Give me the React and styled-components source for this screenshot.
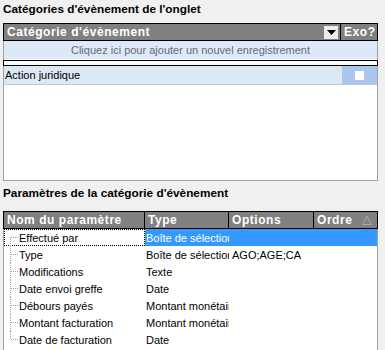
import styled, { createGlobalStyle } from 'styled-components';

// STYLES
const GlobalStyle = createGlobalStyle`
  body {
    margin: 0;
    background: #f0f0f0;
    font-family: 'Liberation Sans', Arial, sans-serif;
    font-size: 11px;
    color: #000;
  }
`;

const Page = styled.div`
  width: 385px;
  height: 350px;
  overflow: hidden;
  padding: 0 7px 0 3px;
  box-sizing: border-box;
`;

const Title = styled.div`
  font-weight: bold;
  font-size: 11.8px;
  height: ${(props) => props.h}px;
  line-height: 16px;
  padding-top: ${(props) => props.top}px;
  box-sizing: border-box;
  color: #000;
`;

const Grid = styled.div`
  border: 1px solid #a0a0a0;
  border-top: none;
  background: #fff;
  height: ${(props) => props.h}px;
  box-sizing: border-box;
`;

const Header = styled.div`
  display: grid;
  grid-template-columns: ${(props) => props.cols};
  background: #808080;
  border: 1px solid #000;
  margin: 0 -1px;
  height: 18px;
  box-sizing: border-box;
`;

const HeadCell = styled.div`
  display: flex;
  align-items: center;
  color: #fff;
  font-weight: bold;
  font-size: 12px;
  letter-spacing: 0.55px;
  padding: 0 2px 0 3px;
  border-right: ${(props) => (props.last ? 'none' : '1px solid #000')};
  white-space: nowrap;
  overflow: hidden;
`;

const DropButton = styled.span`
  margin-left: auto;
  width: 14px;
  height: 13px;
  background: #ececec;
  display: flex;
  align-items: center;
  justify-content: center;
`;

const SortMark = styled.span`
  margin-left: auto;
  margin-right: 3px;
  display: flex;
`;

const AddRow = styled.div`
  height: 18px;
  line-height: 18px;
  background: #dde9f6;
  color: #6a6a78;
  text-align: center;
  font-size: 11px;
`;

const Splitter = styled.div`
  height: 6px;
  margin: 1px -1px 0;
  background: #fafafa;
  border: 1px solid #000;
  box-sizing: border-box;
`;

const DataRow = styled.div`
  display: grid;
  grid-template-columns: 1fr 35px;
  height: 18px;
  background: #dde8f5;
  border-bottom: 1px solid #c8c8c8;
  font-size: 11px;
`;

const DataCell = styled.div`
  display: flex;
  align-items: center;
  justify-content: ${(props) => (props.center ? 'center' : 'flex-start')};
  padding-left: ${(props) => (props.center ? 0 : 1)}px;
  background: ${(props) => props.bg || 'transparent'};
`;

const CheckBox = styled.span`
  width: 11px;
  height: 11px;
  background: #fff;
  border: 1px solid #b8c8dc;
  box-sizing: border-box;
`;

const ParamRow = styled.div`
  display: grid;
  grid-template-columns: 141px 84px 85px 1fr;
  height: 17px;
  font-size: 11px;
`;

const NameCell = styled.div`
  position: relative;
  display: flex;
  align-items: center;
  padding-left: 15px;
  white-space: nowrap;
  overflow: hidden;
  outline: ${(props) => (props.focus ? '1px dotted #000' : 'none')};
  outline-offset: -1px;

  &::before {
    content: '';
    position: absolute;
    left: 6px;
    top: ${(props) => (props.first ? 8 : 0)}px;
    height: ${(props) => (props.lastRow ? 8 : props.first ? 9 : 17)}px;
    border-left: 1px dotted #a0a0a0;
  }

  &::after {
    content: '';
    position: absolute;
    left: 7px;
    top: 8px;
    width: 7px;
    border-top: 1px dotted #a0a0a0;
  }
`;

const ValueCell = styled.div`
  display: flex;
  align-items: center;
  padding-left: ${(props) => props.pad}px;
  white-space: nowrap;
  overflow: hidden;
  background: ${(props) => (props.sel ? '#3399ff' : 'transparent')};
  color: ${(props) => (props.sel ? '#fff' : '#000')};
`;

const params = [
  { name: 'Effectué par', type: 'Boîte de sélection', options: '' },
  { name: 'Type', type: 'Boîte de sélection', options: 'AGO;AGE;CA' },
  { name: 'Modifications', type: 'Texte', options: '' },
  { name: 'Date envoi greffe', type: 'Date', options: '' },
  { name: 'Débours payés', type: 'Montant monétaire', options: '' },
  { name: 'Montant facturation', type: 'Montant monétaire', options: '' },
  { name: 'Date de facturation', type: 'Date', options: '' },
];

function App() {
  return (
    <Page>
      <GlobalStyle />
      <Title h={23} top={1}>Catégories d'évènement de l'onglet</Title>
      <Grid h={158}>
        <Header cols="1fr 36px">
          <HeadCell>
            Catégorie d'évènement
            <DropButton>
              <svg width="9" height="5" viewBox="0 0 9 5">
                <path d="M0 0h9L4.5 5z" fill="#000" />
              </svg>
            </DropButton>
          </HeadCell>
          <HeadCell last>Exo?</HeadCell>
        </Header>
        <AddRow>Cliquez ici pour ajouter un nouvel enregistrement</AddRow>
        <Splitter />
        <DataRow>
          <DataCell>Action juridique</DataCell>
          <DataCell center bg="#a9c7ee">
            <CheckBox />
          </DataCell>
        </DataRow>
      </Grid>
      <Title h={30} top={4}>Paramètres de la catégorie d'évènement</Title>
      <Grid h={150}>
        <Header cols="141px 84px 85px 1fr">
          <HeadCell>Nom du paramètre</HeadCell>
          <HeadCell>Type</HeadCell>
          <HeadCell>Options</HeadCell>
          <HeadCell last>
            Ordre
            <SortMark>
              <svg width="10" height="9" viewBox="0 0 10 9">
                <path d="M5 0.5L9.5 8.5H0.5z" fill="none" stroke="#a8a8a8" />
              </svg>
            </SortMark>
          </HeadCell>
        </Header>
        {params.map((p, i) => (
          <ParamRow key={p.name}>
            <NameCell
              focus={i === 0}
              first={i === 0}
              lastRow={i === params.length - 1}
            >
              {p.name}
            </NameCell>
            <ValueCell sel={i === 0} pad={1}>{p.type}</ValueCell>
            <ValueCell sel={i === 0} pad={3}>{p.options}</ValueCell>
            <ValueCell sel={i === 0} pad={3} />
          </ParamRow>
        ))}
      </Grid>
    </Page>
  );
}

export default App;
